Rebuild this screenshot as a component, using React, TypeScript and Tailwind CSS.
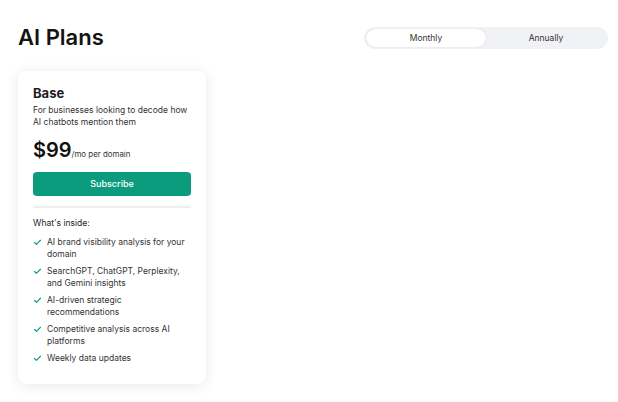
import { Check } from 'lucide-react';

const features = [
  'AI brand visibility analysis for your domain',
  'SearchGPT, ChatGPT, Perplexity, and Gemini insights',
  'AI-driven strategic recommendations',
  'Competitive analysis across AI platforms',
  'Weekly data updates',
];

export default function App() {
  return (
    <main className="min-h-screen w-full bg-white font-['Inter',sans-serif] text-[#1a1a1a] pl-[18px] pr-[10px] pt-[24px]">
      {/* header */}
      <div className="flex items-center justify-between">
        <h1 className="text-[22px] font-semibold leading-[26px] text-[#141414]">AI Plans</h1>
        <div className="mt-[2px] w-[244px] h-[22px] rounded-full bg-[#f1f2f5] p-[2px] flex text-[8.5px] text-[#333]">
          <button className="flex-1 rounded-full bg-white shadow-[0_0_1px_rgba(0,0,0,0.2)]">Monthly</button>
          <button className="flex-1 rounded-full">Annually</button>
        </div>
      </div>

      {/* card */}
      <div className="mt-[21px] w-[188px] rounded-[8px] bg-white shadow-[0_2px_14px_rgba(0,0,0,0.09)] px-[15px] pt-[14px] pb-[20px]">
        <h2 className="text-[13px] font-bold leading-[16px] text-[#1d1d1d]">Base</h2>
        <p className="mt-[3px] text-[8.5px] leading-[12px] text-[#333]">
          For businesses looking to decode how AI chatbots mention them
        </p>
        <div className="mt-[9px] flex items-baseline">
          <span className="text-[20px] font-semibold leading-[26px] text-[#111]">$99</span>
          <span className="text-[7.9px] text-[#333]">/mo per domain</span>
        </div>
        <button className="mt-[9px] w-full h-[24px] rounded-[4px] bg-[#0b9c7d] text-white text-[9px] font-medium">
          Subscribe
        </button>
        <div className="mt-[10px] h-[2px] bg-[#efefef]" />
        <p className="mt-[9px] text-[8.5px] leading-[12px] text-[#222]">What's inside:</p>
        <ul className="mt-[7px] flex flex-col gap-[5px]">
          {features.map((f) => (
            <li key={f} className="flex items-start gap-[5px]">
              <Check className="mt-[2px] w-[9px] h-[9px] text-[#0b9c7d] shrink-0" strokeWidth={3} />
              <span className="text-[8.5px] leading-[12px] text-[#333]">{f}</span>
            </li>
          ))}
        </ul>
      </div>
    </main>
  );
}
